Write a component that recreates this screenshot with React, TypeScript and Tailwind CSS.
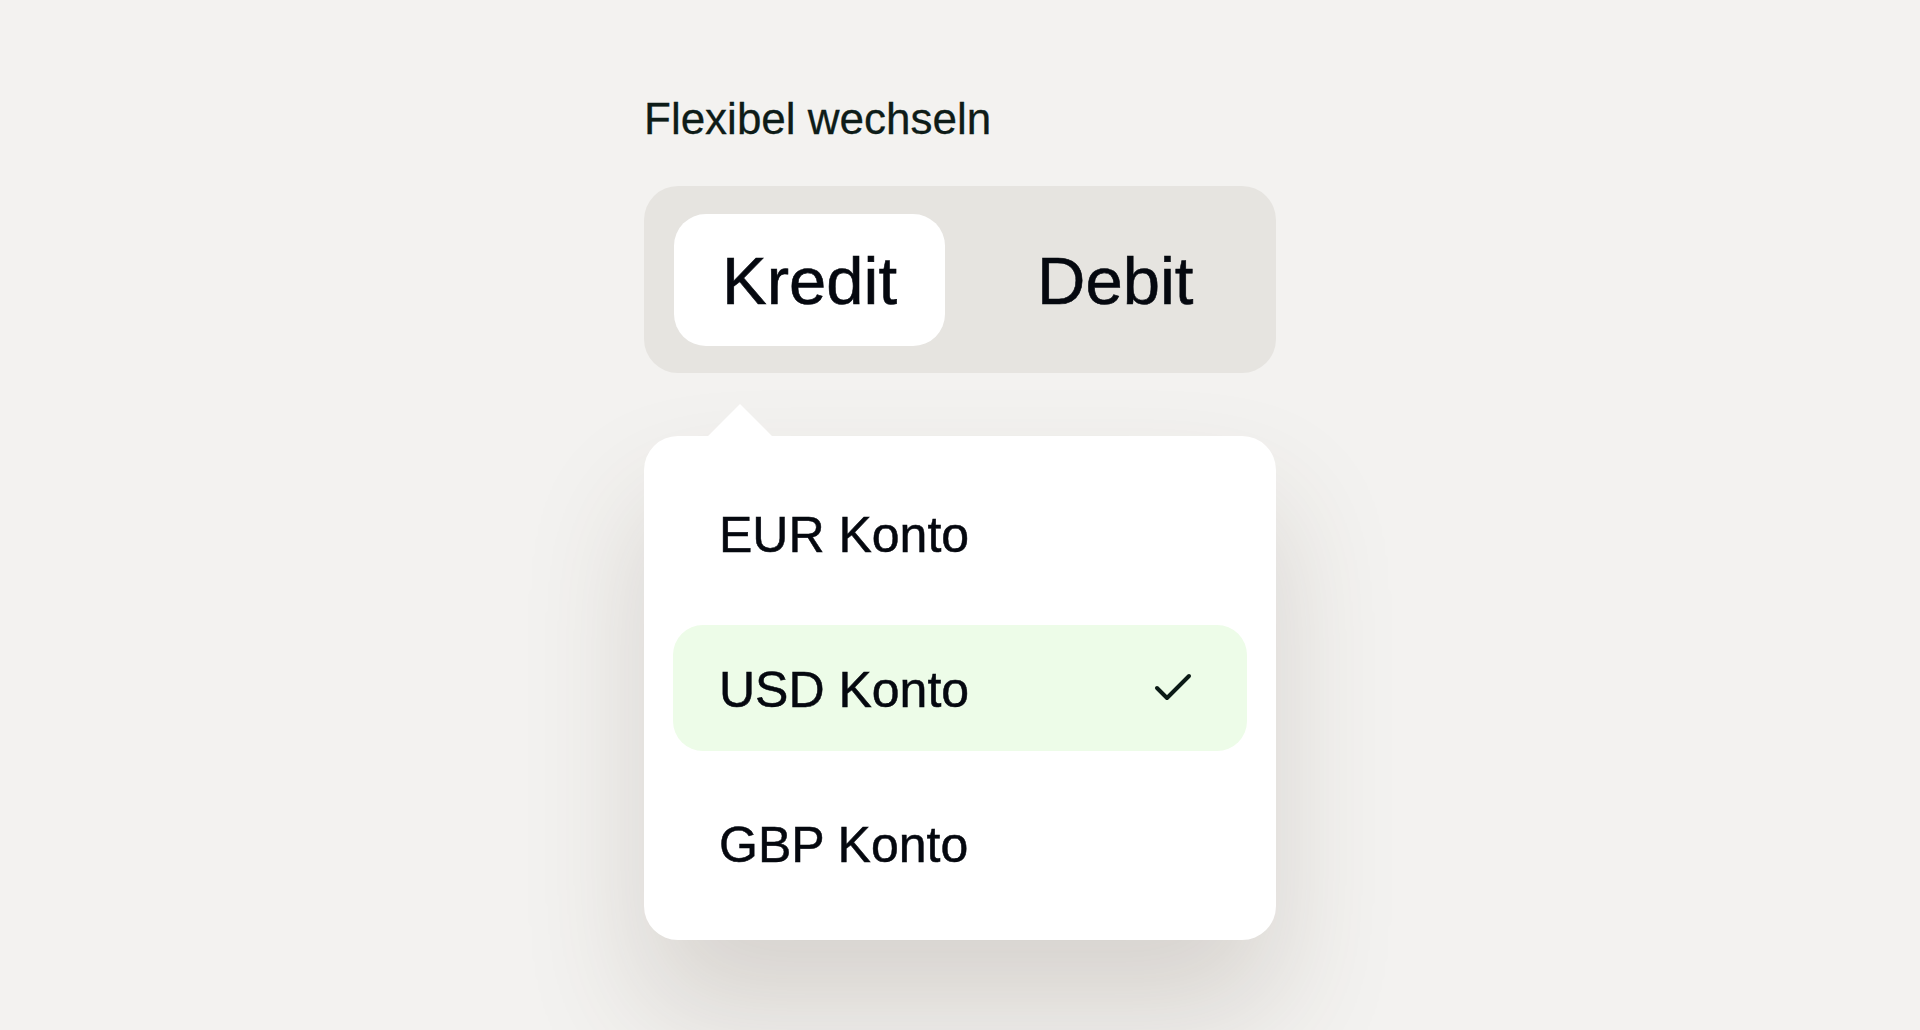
import React, { useState } from "react";
import { Check } from "lucide-react";

const accounts = ["EUR Konto", "USD Konto", "GBP Konto"];

const App: React.FC = () => {
  const [mode, setMode] = useState<"kredit" | "debit">("kredit");
  const [selected, setSelected] = useState("USD Konto");

  return (
    <div
      className="h-screen w-full overflow-hidden bg-[#f3f2f0] flex justify-center pt-[97px]"
      style={{ fontFamily: "'Liberation Sans', Arial, sans-serif" }}
    >
      <div className="w-[632px] flex flex-col">
        <h2 className="text-[44px] leading-none text-[#0e1c18] font-normal [-webkit-text-stroke:0.3px_#0e1c18]">
          Flexibel wechseln
        </h2>

        {/* Kredit / Debit toggle */}
        <div className="mt-[45px] flex items-center gap-[44px] bg-[#e6e4e0] rounded-[34px] pl-[30px] pr-[29px] pt-[28px] pb-[27px]">
          <button
            className={`h-[132px] px-[48px] rounded-[32px] text-[67px] leading-none text-[#05080f] [-webkit-text-stroke:0.6px_#05080f] ${
              mode === "kredit" ? "bg-white" : "bg-transparent"
            }`}
            onClick={() => setMode("kredit")}
          >
            Kredit
          </button>
          <button
            className={`h-[132px] px-[48px] rounded-[32px] text-[67px] leading-none text-[#05080f] [-webkit-text-stroke:0.6px_#05080f] ${
              mode === "debit" ? "bg-white" : "bg-transparent"
            }`}
            onClick={() => setMode("debit")}
          >
            Debit
          </button>
        </div>

        {/* Account dropdown */}
        <div className="relative mt-[63px] bg-white rounded-[34px] px-[29px] py-[34px] flex flex-col gap-[29px] shadow-[0_70px_120px_rgba(80,60,40,0.17)]">
          <div className="absolute left-[72px] -top-[22px] w-12 h-12 bg-white rotate-45" />
          {accounts.map((acc) => {
            const active = acc === selected;
            return (
              <button
                key={acc}
                className={`relative h-[126px] rounded-[30px] pl-[46px] pr-[50px] flex items-center justify-between text-left ${
                  active ? "bg-[#edfce8]" : "bg-transparent"
                }`}
                onClick={() => setSelected(acc)}
              >
                <span className="pt-[4px] text-[50px] leading-none text-[#05080f] [-webkit-text-stroke:0.5px_#05080f]">
                  {acc}
                </span>
                {active && <Check size={48} strokeWidth={2} className="text-[#0b1a16]" />}
              </button>
            );
          })}
        </div>
      </div>
    </div>
  );
};

export default App;
